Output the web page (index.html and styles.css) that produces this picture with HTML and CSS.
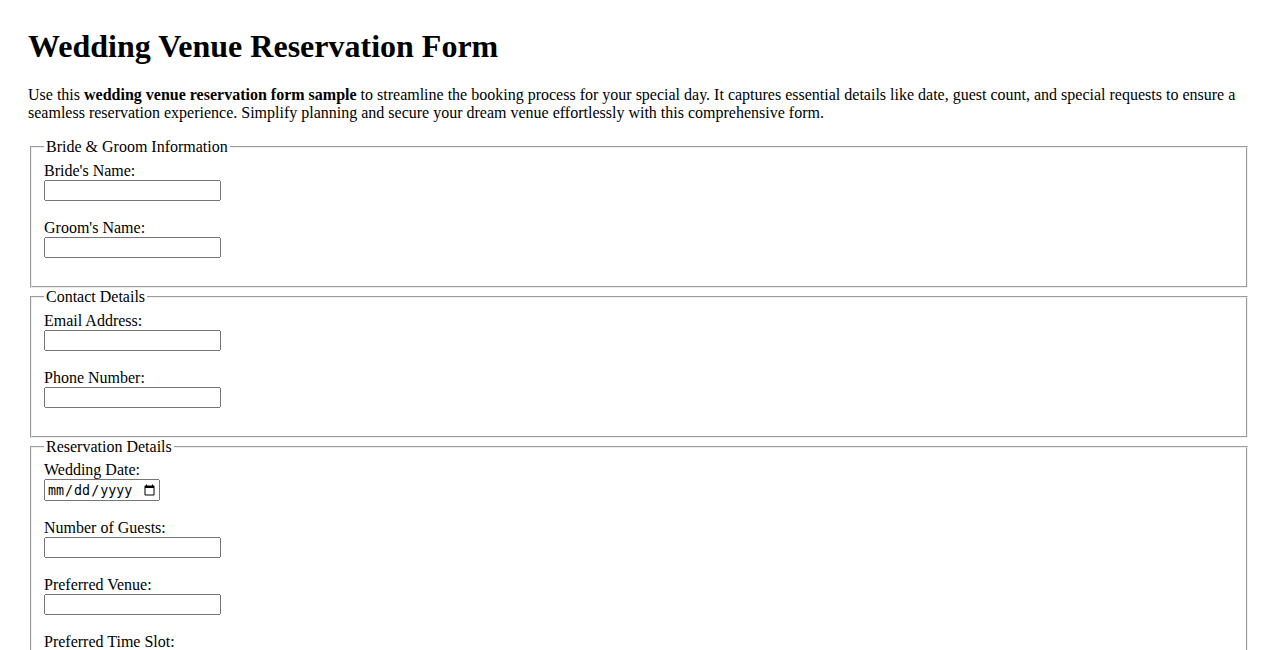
FILE: index.html
```html
<!DOCTYPE html>
<html lang="en">
<head>
    <meta charset="UTF-8">
    <meta name="viewport" content="width=device-width, initial-scale=1.0">
    <title>Wedding Venue Reservation Form</title>
    <link rel="stylesheet" href="styles.css">
</head>
<body>
    <h1>Wedding Venue Reservation Form</h1>
    <p>Use this <strong>wedding venue reservation form sample</strong> to streamline the booking process for your special day. It captures essential details like date, guest count, and special requests to ensure a seamless reservation experience. Simplify planning and secure your dream venue effortlessly with this comprehensive form.</p>
    <form action="" class="reservationForm">
        <fieldset>
            <legend>Bride &amp; Groom Information</legend>
            <div class="field">
                <label for="brideName">Bride's Name:</label>
                <input type="text" id="brideName" name="brideName">
            </div>
            <div class="field">
                <label for="groomName">Groom's Name:</label>
                <input type="text" id="groomName" name="groomName">
            </div>
        </fieldset>
        <fieldset>
            <legend>Contact Details</legend>
            <div class="field">
                <label for="email">Email Address:</label>
                <input type="email" id="email" name="email">
            </div>
            <div class="field">
                <label for="phone">Phone Number:</label>
                <input type="tel" id="phone" name="phone">
            </div>
        </fieldset>
        <fieldset>
            <legend>Reservation Details</legend>
            <div class="field">
                <label for="weddingDate">Wedding Date:</label>
                <input type="date" id="weddingDate" name="weddingDate" class="dateInput">
            </div>
            <div class="field">
                <label for="guests">Number of Guests:</label>
                <input type="number" id="guests" name="guests">
            </div>
            <div class="field">
                <label for="venue">Preferred Venue:</label>
                <input type="text" id="venue" name="venue">
            </div>
            <div class="field">
                <label for="timeSlot">Preferred Time Slot:</label>
                <select id="timeSlot" name="timeSlot">
                    <option value="morning">Morning</option>
                    <option value="afternoon">Afternoon</option>
                    <option value="evening">Evening</option>
                </select>
            </div>
        </fieldset>
        <fieldset>
            <legend>Special Requests</legend>
            <div class="field">
                <label for="requests">Additional Requests:</label>
                <textarea id="requests" name="requests" rows="4" cols="40"></textarea>
            </div>
        </fieldset>
        <input type="submit" value="Submit Reservation">
    </form>
</body>
</html>
```

FILE: styles.css
```css
body{
    margin: 28px;
    font-family: "Liberation Serif", "Times New Roman", serif;
    font-size: 16px;
    color: #000;
    background-color: #fff;
}
h1{
    font-size: 32px;
    margin: 0 0 21.44px;
}
p{
    margin: 16px 0;
}
fieldset{
    margin: 0 2px;
}
.field{
    margin-bottom: 18px;
}
.field label{
    display: block;
}
.field input{
    display: block;
    box-sizing: border-box;
    width: 177px;
    height: 21px;
}
.field .dateInput{
    width: 116px;
    height: 22px;
}
```
